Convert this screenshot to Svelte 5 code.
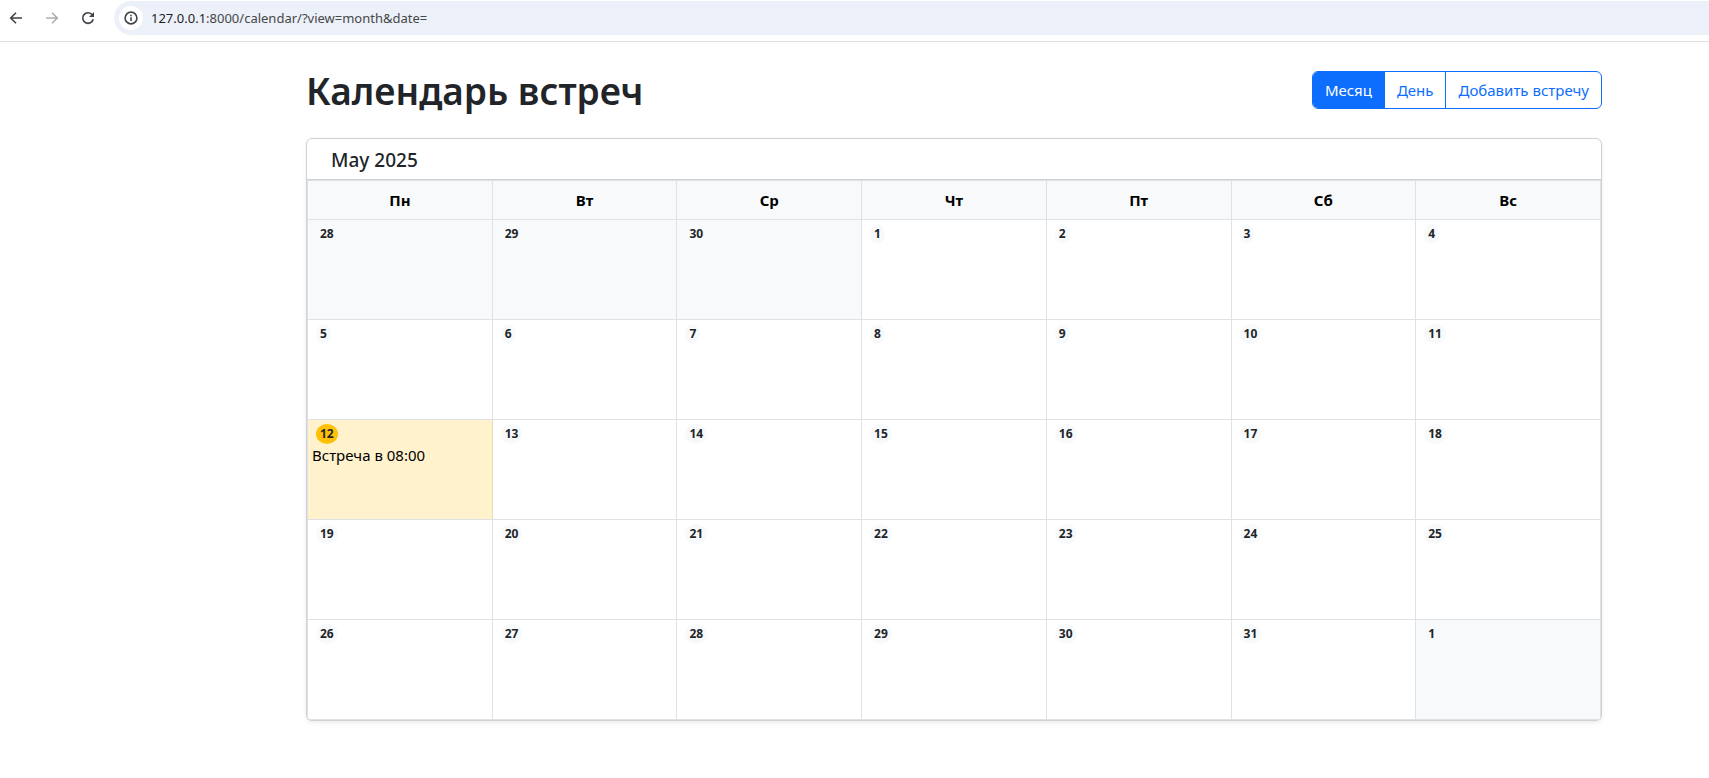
<script>
  const weekdays = ['Пн', 'Вт', 'Ср', 'Чт', 'Пт', 'Сб', 'Вс'];
  const weeks = [
    [28, 29, 30, 1, 2, 3, 4],
    [5, 6, 7, 8, 9, 10, 11],
    [12, 13, 14, 15, 16, 17, 18],
    [19, 20, 21, 22, 23, 24, 25],
    [26, 27, 28, 29, 30, 31, 1]
  ].map((week, w) =>
    week.map((day) => {
      const outside = (w === 0 && day > 7) || (w === 4 && day < 8);
      return { day, outside, today: !outside && day === 12 };
    })
  );
</script>

<div class="toolbar">
  <button class="nav" aria-label="Back">
    <svg viewBox="0 0 16 16"><path d="M14 8H3M8 2.7 2.7 8 8 13.3" /></svg>
  </button>
  <button class="nav off" aria-label="Forward" disabled>
    <svg viewBox="0 0 16 16"><path d="M2 8h11M8 2.7 13.3 8 8 13.3" /></svg>
  </button>
  <button class="nav" aria-label="Reload">
    <svg viewBox="0 0 16 16"><path d="M13.2 9.2A5.3 5.3 0 1 1 12.3 4.900L13.500 6.200" /><path class="solid" d="M14 2v5H9z" /></svg>
  </button>
  <div class="address">
    <button class="info" aria-label="Site information">
      <svg viewBox="0 0 16 16"><circle cx="8" cy="8" r="5.900" /><path d="M8 7.300v3.700M8 4.800v1.500" /></svg>
    </button>
    <span class="url"><b>127.0.0.1</b>:8000/calendar/?view=month&amp;date=</span>
  </div>
</div>

<main>
  <header>
    <h1>Календарь встреч</h1>
    <nav>
      <a class="active" href="#month">Месяц</a>
      <a href="#day">День</a>
      <a href="#add">Добавить встречу</a>
    </nav>
  </header>

  <section class="card">
    <h2>May 2025</h2>
    <table>
      <thead>
        <tr>
          {#each weekdays as name}<th>{name}</th>{/each}
        </tr>
      </thead>
      <tbody>
        {#each weeks as week}
          <tr>
            {#each week as cell}
              <td class:outside={cell.outside} class:today={cell.today}>
                <span class="day">{cell.day}</span>
                {#if cell.today}<div class="event">Встреча в 08:00</div>{/if}
              </td>
            {/each}
          </tr>
        {/each}
      </tbody>
    </table>
  </section>
</main>

<style>
  :global(body) {
    margin: 0;
    background: #fff;
    color: #212529;
    font: 400 15px/24px 'Noto Sans', 'Open Sans', sans-serif;
  }
  .toolbar {
    display: flex;
    align-items: center;
    height: 42px;
    box-sizing: border-box;
    padding: 0 0 5px 8px;
    border-bottom: 1px solid #dfdfe0;
  }
  button {
    display: flex;
    align-items: center;
    justify-content: center;
    padding: 0;
    border: 0;
    background: none;
  }
  .nav {
    width: 16px;
    margin-right: 20px;
  }
  .nav:nth-child(3) {
    margin-right: 18px;
  }
  svg {
    width: 16px;
    height: 16px;
    fill: none;
    stroke: #404347;
    stroke-width: 1.6;
  }
  .off svg {
    stroke: #adaeb0;
  }
  svg .solid {
    fill: #404347;
    stroke: none;
  }
  .address {
    display: flex;
    flex: 1;
    align-items: center;
    height: 34px;
    box-sizing: border-box;
    padding-left: 5px;
    border-radius: 17px 0 0 17px;
    background: #ecf0f9;
  }
  .info {
    width: 24px;
    height: 24px;
    margin-right: 8px;
    border-radius: 50%;
    background: #fff;
  }
  .url {
    color: #474747;
    font-size: 13px;
  }
  .url b {
    color: #1f1f1f;
    font-weight: 400;
  }
  main {
    padding: 24px 107px 24px 306px;
  }
  header {
    display: flex;
    align-items: center;
    justify-content: space-between;
    margin-bottom: 24px;
  }
  h1 {
    margin: 0;
    padding-top: 2px;
    font-size: 37px;
    font-weight: 600;
    line-height: 46px;
  }
  nav {
    display: flex;
    border: 1px solid #0d6efd;
    border-radius: 6px;
    overflow: hidden;
  }
  nav a {
    padding: 6px 12px;
    color: #0d6efd;
    text-decoration: none;
  }
  nav a + a {
    border-left: 1px solid #0d6efd;
  }
  nav .active {
    background: #0d6efd;
    color: #fff;
  }
  .card {
    border: 1px solid #d0d1d2;
    border-radius: 6px;
    box-shadow: 0 2px 4px rgba(0, 0, 0, 0.075);
  }
  h2 {
    margin: 0;
    padding: 9px 24px 7px;
    border-bottom: 1px solid #d0d1d2;
    font-size: 19px;
    font-weight: 500;
    line-height: 24px;
  }
  table {
    width: 100%;
    table-layout: fixed;
    border-collapse: collapse;
  }
  th,
  td {
    box-sizing: border-box;
    border: 1px solid #dee2e6;
  }
  th {
    height: 39px;
    padding: 0;
    background: #f8f9fb;
    color: #000;
    font-weight: 700;
  }
  td {
    height: 100px;
    padding: 4px;
    vertical-align: top;
    color: #000;
  }
  .outside {
    background: #f8f9fb;
  }
  .today {
    background: #fff2cd;
    border-right-color: #e6dbb9;
  }
  .day {
    display: block;
    width: fit-content;
    margin-left: 4px;
    padding: 0 4px;
    border-radius: 50%;
    background: #f8f9fb;
    color: #212529;
    font-size: 12px;
    font-weight: 700;
    line-height: 20px;
  }
  .today .day {
    background: #ffc107;
  }
  .event {
    line-height: 22px;
  }
</style>
